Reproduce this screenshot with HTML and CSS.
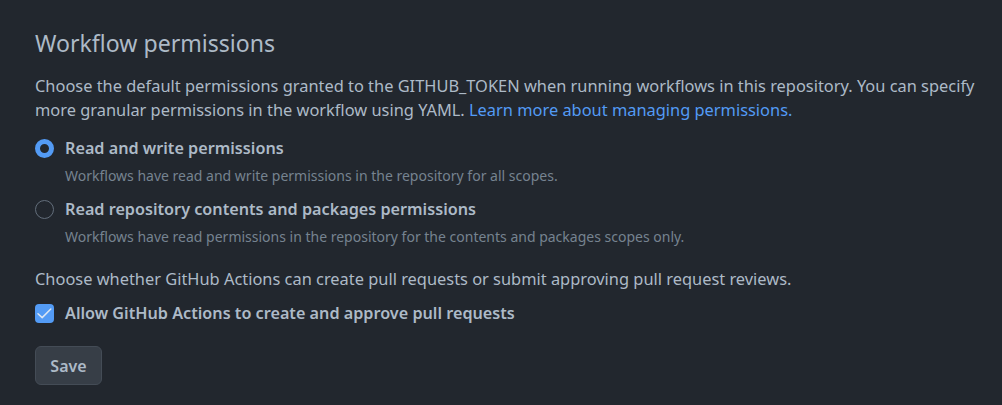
FILE: index.html
```html
<!DOCTYPE html>
<html>
<head>
<meta charset="utf-8">
<link rel="stylesheet" href="styles.css">
</head>
<body>
<div class="page">
  <h2 class="title">Workflow permissions</h2>
  <p class="desc">Choose the default permissions granted to the GITHUB_TOKEN when running workflows in this repository. You can specify more granular permissions in the workflow using YAML. <a href="#" class="link">Learn more about managing permissions.</a></p>
  <div class="options">
    <label class="option">
      <span class="radio checked"></span>
      <span class="option-text">
        <span class="option-label">Read and write permissions</span>
        <span class="option-note">Workflows have read and write permissions in the repository for all scopes.</span>
      </span>
    </label>
    <label class="option">
      <span class="radio"></span>
      <span class="option-text">
        <span class="option-label">Read repository contents and packages permissions</span>
        <span class="option-note">Workflows have read permissions in the repository for the contents and packages scopes only.</span>
      </span>
    </label>
  </div>
  <p class="desc second">Choose whether GitHub Actions can create pull requests or submit approving pull request reviews.</p>
  <label class="check-row">
    <span class="checkbox"><svg width="19" height="19" viewBox="0 0 19 19"><path d="M3 9.8 L7.2 13.6 L15.8 5" fill="none" stroke="#dce6f2" stroke-width="1.5" stroke-linecap="round" stroke-linejoin="round"/></svg></span>
    <span class="option-label">Allow GitHub Actions to create and approve pull requests</span>
  </label>
  <button class="btn">Save</button>
</div>
</body>
</html>
```
FILE: styles.css
```css
html, body {
  margin: 0;
  padding: 0;
  background: #22272e;
}
body {
  font-family: "Noto Sans", "Open Sans", sans-serif;
  color: #adbac7;
}
.page {
  padding: 25px 0 0 35px;
  width: 950px;
}
.title {
  font-size: 23.1px;
  font-weight: 400;
  line-height: 36px;
  margin: 0 0 13px;
  color: #adbac7;
}
.desc {
  font-size: 16.4px;
  line-height: 24px;
  margin: 0;
}
.link {
  color: #539bf5;
  text-decoration: none;
}
.options {
  display: flex;
  flex-direction: column;
  gap: 11px;
  margin-top: 14px;
}
.option {
  display: flex;
  gap: 11px;
  align-items: flex-start;
}
.radio {
  width: 19px;
  height: 19px;
  box-sizing: border-box;
  border-radius: 50%;
  border: 1px solid #636e7b;
  margin-top: 3px;
  flex: none;
}
.radio.checked {
  border: 5px solid #539bf5;
  background: #22272e;
}
.option-text {
  display: flex;
  flex-direction: column;
}
.option-label {
  font-size: 16.2px;
  font-weight: 600;
  line-height: 24px;
  color: #adbac7;
}
.option-note {
  font-size: 14px;
  line-height: 20px;
  margin-top: 6px;
  color: #768390;
}
.second {
  margin-top: 20px;
}
.check-row {
  display: flex;
  gap: 11px;
  align-items: center;
  margin-top: 10px;
}
.checkbox {
  width: 19px;
  height: 19px;
  border-radius: 4px;
  background: #539bf5;
  display: flex;
  flex: none;
}
.btn {
  display: block;
  margin-top: 21px;
  width: 67px;
  height: 39px;
  border-radius: 6px;
  border: 1px solid #444c56;
  background: #373e47;
  color: #adbac7;
  font-family: inherit;
  font-size: 16px;
  font-weight: 600;
  padding: 0;
}
```
